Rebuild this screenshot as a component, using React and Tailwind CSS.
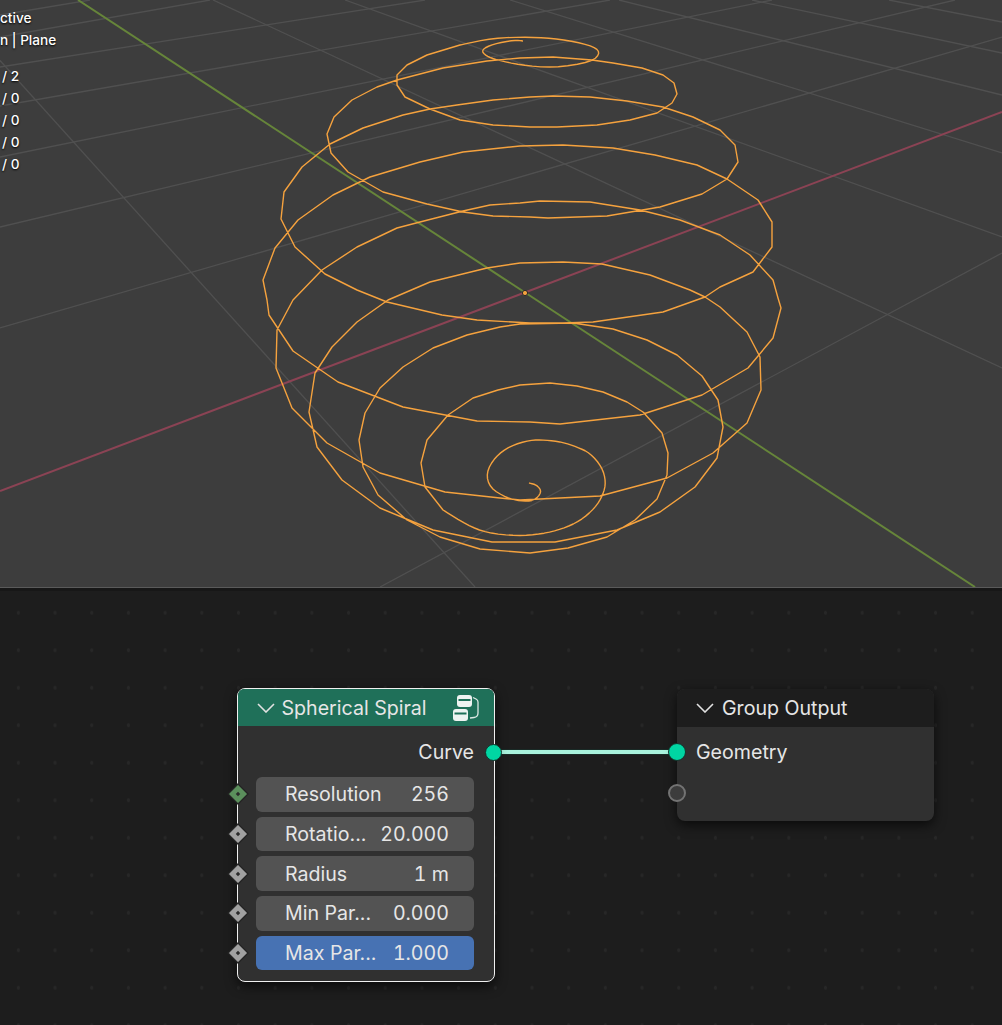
import React from "react"

const spiralHead = "523,41 515,40 493,44 481,50 486,56 497,60 520,65 553,68 592,62 601,52 590,45 560,39 530,37 493,38 460,45"
const spiralBody = "460,45 427,55 407,65 397,75 397,85 405,97 430,109 460,120 493,125 530,127 557,127 597,125 630,120 657,113 672,103 677,94 674,83 663,75 642,68 613,63 592,60 553,57 520,58 487,61 443,68 397,80 377,87 352,100 334,117 327,134 331,153 348,172 383,192 427,204 463,212 493,216 530,217 548,218 607,216 660,207 702,194 727,179 738,162 735,145 720,130 693,117 663,107 627,101 590,97 553,96 530,97 493,100 457,105 430,109 403,115 363,128 330,144 302,167 284,192 281,219 295,247 325,274 357,290 387,302 442,315 477,320 530,323 563,323 593,322 663,312 705,297 720,287 753,272 772,247 772,222 758,200 727,179 697,165 655,155 613,148 563,145 520,146 463,152 420,162 370,177 333,195 298,220 275,248 263,280 267,300 269,315 293,351 338,382 403,407 477,421 530,422 560,424 640,415 702,395 748,368 773,338 781,308 778,298 773,280 750,255 720,235 680,220 640,210 590,202 540,201 520,203 490,205 463,211 420,222 397,228 357,247 322,270 293,300 277,330 276,368 292,408 327,443 380,473 445,492 500,498 520,500 600,496 667,478 713,453 747,423 761,390 760,357 747,332 720,307 705,297 690,290 650,275 602,264 563,262 520,263 487,268 430,282 388,300 357,322 332,347 315,373 309,412 317,447 342,480 380,508 433,530 492,542 530,542 555,542 617,530 660,512 695,487 717,458 723,427 718,400 702,376 677,355 647,340 613,329 573,323 520,324 500,327 467,335 433,348 403,367 380,388 365,413 359,440 363,467 378,495 407,520 440,537 480,549 530,553 568,548 607,537 635,520 657,499 667,475 668,453 662,433 643,412 627,402 603,392 577,386 550,383 520,385 498,390 473,398 448,415 427,440 421,463 425,487 443,510"
const spiralTail = "443,510 467,525 487,533 517,536 542,534 562,529 580,521 595,508 603,495 606,482 602,467 590,453 577,447 562,442 545,440 530,440 510,446 495,457 486,473 490,488 507,498 520,501 534,501 542,492 537,485 529,483"

function parsePoints(str) {
    return str.split(" ").map((p) => p.split(",").map(Number))
}

// corner cutting, the inner turns of the spiral are round in the picture
function smooth(points, rounds) {
    let pts = points
    for (let r = 0; r < rounds; r++) {
        const next = [pts[0]]
        for (let i = 0; i < pts.length - 1; i++) {
            const [ax, ay] = pts[i]
            const [bx, by] = pts[i + 1]
            next.push([ax * 0.75 + bx * 0.25, ay * 0.75 + by * 0.25])
            next.push([ax * 0.25 + bx * 0.75, ay * 0.25 + by * 0.75])
        }
        next.push(pts[pts.length - 1])
        pts = next
    }
    return pts
}

const spiral = [
    ...smooth(parsePoints(spiralHead), 2),
    ...parsePoints(spiralBody),
    ...smooth(parsePoints(spiralTail), 2),
].map((p) => p.join(",")).join(" ")

// grid lines of the floor, [x1, y1, x2, y2]
const gridLines = [
    [0, 227, 955, 0],
    [0, 157, 772, 0],
    [0, 106, 610, 0],
    [0, 67, 425, 0],
    [0, 37, 210, 0],
    [0, 15, 90, 0],
    [0, 328, 1002, 37],
    [380, 587, 1002, 253],
    [-5, 55, 475, 587],
    [213, 0, 1002, 368],
    [345, 0, 1002, 237],
    [510, 0, 1002, 153],
    [619, 0, 1002, 95],
    [752, 0, 1002, 53],
    [889, 0, 1002, 22],
]

const fields = [
    { label: "Resolution", value: "256", green: true },
    { label: "Rotatio...", value: "20.000" },
    { label: "Radius", value: "1 m" },
    { label: "Min Par...", value: "0.000" },
    { label: "Max Par...", value: "1.000", active: true },
]

const stats = ["/ 2", "/ 0", "/ 0", "/ 0", "/ 0"]

function Chevron() {
    return (
        <svg width="18" height="10" viewBox="0 0 18 10" className="shrink-0">
            <path d="M1 1 L9 9 L17 1" fill="none" stroke="#e2e2e2" strokeWidth="1.6" />
        </svg>
    )
}

function GroupIcon() {
    return (
        <svg width="28" height="28" viewBox="0 0 28 28" className="absolute left-[215px] top-[5px]">
            <rect x="4" y="1" width="15" height="12" rx="3" fill="#eef3f1" />
            <rect x="5.5" y="5" width="12" height="2" fill="#1f7059" />
            <rect x="0" y="15" width="15" height="12" rx="3" fill="#eef3f1" />
            <rect x="1.5" y="18.5" width="12" height="2" fill="#1f7059" />
            <path d="M20 3.5 L23 5 Q25 6 25 8 L25 19 Q25 23 21 23.5 L17 24" fill="none" stroke="#dbe7e3" strokeWidth="1.3" />
        </svg>
    )
}

function DiamondSocket({ green }) {
    return (
        <svg width="22" height="22" viewBox="0 0 22 22" className="absolute left-[-11.5px] top-1/2 -translate-y-1/2">
            <path d="M11 1 L21 11 L11 21 L1 11 Z" fill={green ? "#5b8f5c" : "#a1a1a1"} stroke="#232323" strokeWidth="1.3" />
            <path d="M11 8.8 L13.2 11 L11 13.2 L8.8 11 Z" fill="#2a2a2a" />
        </svg>
    )
}

function Field({ label, value, active, green }) {
    return (
        <div className="relative pl-[17.5px] pr-5 h-[34.5px] flex items-center">
            <DiamondSocket green={green} />
            <div className={`flex-1 h-full rounded-md flex items-center justify-between pl-[29.5px] pr-[25px] ${active ? "bg-[#4772b3]" : "bg-[#535353]"}`}>
                <span>{label}</span>
                <span className="tabular-nums">{value}</span>
            </div>
        </div>
    )
}

export default function App() {
    return (
        <div className="w-[1002px] h-[1025px] flex flex-col overflow-hidden bg-[#1d1d1d] font-['Inter',sans-serif]">
            <div className="relative h-[587px] bg-[#3d3d3d] shrink-0 overflow-hidden">
                <svg width="1002" height="587" viewBox="0 0 1002 587" className="block">
                    {gridLines.map((l, i) => (
                        <line key={i} x1={l[0]} y1={l[1]} x2={l[2]} y2={l[3]} stroke="#505050" strokeWidth="1.3" />
                    ))}
                    <line x1="0" y1="491" x2="1002" y2="112" stroke="#8b4354" strokeWidth="2" />
                    <line x1="78" y1="0" x2="975" y2="587" stroke="#66853a" strokeWidth="2" />
                    <polyline points={spiral} fill="none" stroke="#f5a23e" strokeWidth="1.4" strokeLinejoin="round" />
                    <circle cx="525" cy="293" r="2.6" fill="#f5a23e" stroke="#2a2a2a" strokeWidth="1" />
                </svg>
                <div className="absolute left-0 top-[7px] text-white text-[13.6px] leading-[22px] font-medium whitespace-nowrap [text-shadow:0_1px_2px_#000]">
                    <div>ctive</div>
                    <div>n | Plane</div>
                    <div className="mt-[14px] pl-[2px]">
                        {stats.map((s, i) => (
                            <div key={i}>{s}</div>
                        ))}
                    </div>
                </div>
            </div>

            <div className="h-px bg-[#5a5a5a] shrink-0" />
            <div className="h-[3px] bg-[#171717] shrink-0" />

            <div className="relative flex-1 bg-[#1d1d1d] bg-[radial-gradient(circle,#272727_1.5px,transparent_2px)] bg-[size:36.7px_37.5px] bg-[position:0_3px] text-[19.6px] leading-6 text-[#e6e6e6]">
                <div className="absolute left-[494px] top-[158px] w-[183px] h-[6px] bg-[#a9f2dd] border border-[#1a2b27]" />

                <div className="absolute left-[237px] top-[97px] w-[258px] h-[294px] rounded-lg border-[1.5px] border-[#f0f0f0] bg-[#303030] shadow-[0_4px_12px_rgba(0,0,0,0.65)] flex flex-col">
                    <div className="relative h-[37px] rounded-t-md bg-[#1f7059] flex items-center gap-[7px] pl-[18.5px] shrink-0">
                        <Chevron />
                        <span>Spherical Spiral</span>
                        <GroupIcon />
                    </div>
                    <div className="h-[51px] pr-5 flex items-center justify-end shrink-0">
                        <span>Curve</span>
                    </div>
                    <div className="flex flex-col gap-[5.2px]">
                        {fields.map((f) => (
                            <Field key={f.label} {...f} />
                        ))}
                    </div>
                </div>
                <div className="absolute left-[485px] top-[153px] w-[17px] h-[17px] rounded-full bg-[#00d6a3] border border-[#14332b]" />

                <div className="absolute left-[677px] top-[98px] w-[257px] h-[132px] rounded-lg bg-[#303030] shadow-[0_4px_12px_rgba(0,0,0,0.65)] flex flex-col">
                    <div className="h-[38px] rounded-t-lg bg-[#1d1d1d] flex items-center gap-[8px] pl-[19px] shrink-0">
                        <Chevron />
                        <span>Group Output</span>
                    </div>
                    <div className="relative h-[50px] pl-[19px] flex items-center shrink-0">
                        <span>Geometry</span>
                        <div className="absolute left-[-9px] top-[16px] w-[18px] h-[18px] rounded-full bg-[#00d6a3] border border-[#14332b]" />
                    </div>
                    <div className="relative">
                        <div className="absolute left-[-9px] top-[7px] w-[18px] h-[18px] rounded-full bg-[#3c3c3c] border-2 border-[#737373]" />
                    </div>
                </div>
            </div>
        </div>
    )
}
